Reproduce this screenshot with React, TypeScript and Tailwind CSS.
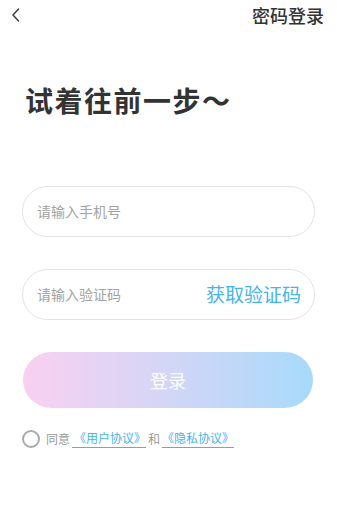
import React from "react";

const font = { fontFamily: '"Noto Sans CJK SC", "Noto Sans", sans-serif' };

export default function App() {
  return (
    <div className="w-[337px] h-[521px] bg-white relative overflow-hidden" style={font}>
      <div className="flex items-center justify-between h-[30px] pl-[10px] pr-[13px]">
        <svg width="12" height="16" viewBox="0 0 12 16" fill="none">
          <path d="M8.5 2 L3 8 L8.5 14" stroke="#444" strokeWidth="1.6" strokeLinecap="round" strokeLinejoin="round" />
        </svg>
        <span className="text-[18px] leading-[30px] text-[#333] font-medium">密码登录</span>
      </div>

      <div className="pl-[25px] mt-[50px] text-[28px] leading-[40px] font-bold text-[#333] tracking-[1.5px]">
        试着往前一步～
      </div>

      <div className="px-[22px] mt-[66px] flex flex-col">
        <div className="h-[51px] w-[293px] rounded-full border border-[#e3e3e3] flex items-center pl-[14px]">
          <span className="text-[14px] text-[#a3a3a3]">请输入手机号</span>
        </div>
        <div className="h-[51px] w-[293px] mt-[32px] rounded-full border border-[#e3e3e3] flex items-center justify-between pl-[14px] pr-[13px]">
          <span className="text-[14px] text-[#a3a3a3]">请输入验证码</span>
          <span className="text-[19px] text-[#45b4f4]">获取验证码</span>
        </div>
        <div className="h-[56px] w-[290px] mt-[32px] ml-[1px] rounded-full bg-gradient-to-r from-[#f9d0f1] to-[#a6dafb] flex items-center justify-center">
          <span className="text-[18px] text-white/90">登录</span>
        </div>
        <div className="flex items-center mt-[21px] text-[12px] leading-[18px]">
          <span className="w-[18px] h-[18px] rounded-full border-[2px] border-[#aaa] mr-[6px] shrink-0" />
          <span className="text-[#999]">同意</span>
          <span className="text-[#45b4f4] border-b border-[#45b4f4] ml-[2px] pl-[2px]">《用户协议》</span>
          <span className="text-[#999] mx-[2px]">和</span>
          <span className="text-[#45b4f4] border-b border-[#45b4f4]">《隐私协议》</span>
        </div>
      </div>
    </div>
  );
}
